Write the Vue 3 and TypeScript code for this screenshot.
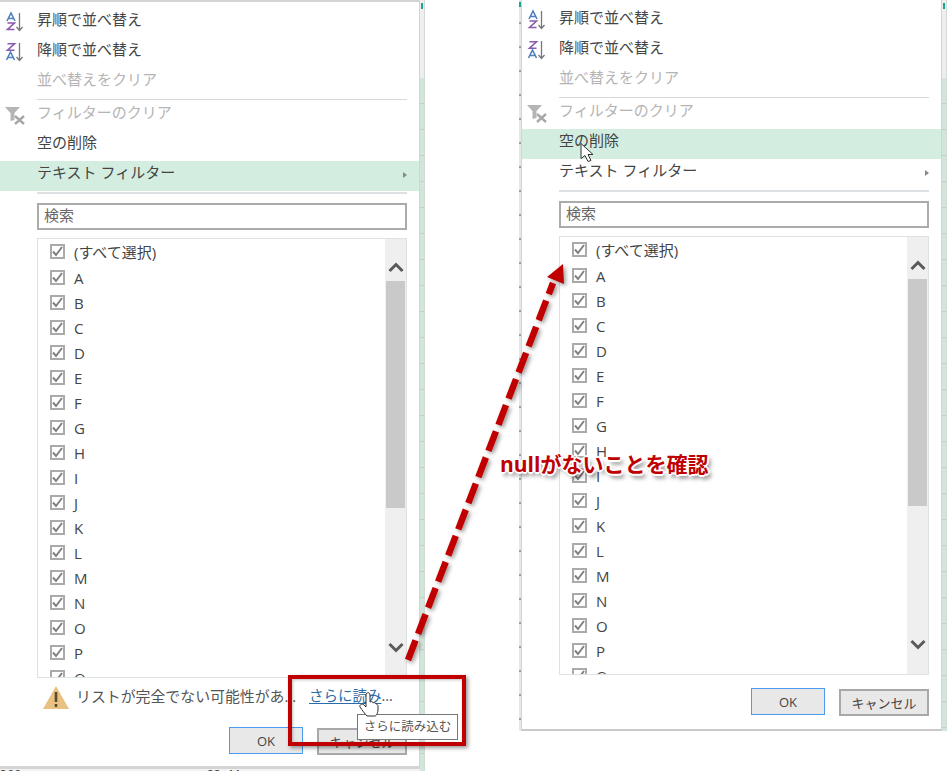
<script setup lang="ts">
type Panel = { id: string; hot: 'empty' | 'text'; warning: boolean };
const panels: Panel[] = [
  { id: 'left', hot: 'text', warning: true },
  { id: 'right', hot: 'empty', warning: false },
];
const letters = 'ABCDEFGHIJKLMNOPQ'.split('');
</script>

<template>
  <div class="canvas">
    <div class="strip strip-left"><i class="mark"></i></div>
    <div class="strip strip-right"><i class="mark"></i></div>
    <div class="sheet-bottom"><span class="c1">366</span><span class="c2">22</span><span class="c3">M</span></div>
    <div class="sheet-edge"><i class="mark"></i></div>

    <section v-for="p in panels" :key="p.id" class="panel" :class="p.id">
      <div class="row"><span class="ico">
        <svg width="26" height="26" viewBox="0 0 26 26">
          <path d="M5 14 9 6 13 14M6.500 11.500h5" fill="none" stroke="#4f81bd" stroke-width="1.600"/>
          <path d="M5.500 16h7l-7 6.500h7" fill="none" stroke="#8a5aae" stroke-width="1.600"/>
          <path d="M17.500 6v17M14.500 20l3 3.500 3-3.500" fill="none" stroke="#777" stroke-width="1.300"/>
        </svg>
      </span>昇順で並べ替え</div>
      <div class="row"><span class="ico">
        <svg width="26" height="26" viewBox="0 0 26 26">
          <path d="M5.500 6.800h7l-7 6.400h7" fill="none" stroke="#8a5aae" stroke-width="1.600"/>
          <path d="M4.500 23 8.500 15 12.500 23M6 20.500h5" fill="none" stroke="#4f81bd" stroke-width="1.600"/>
          <path d="M17.500 6v17M14.500 20l3 3.500 3-3.500" fill="none" stroke="#777" stroke-width="1.300"/>
        </svg>
      </span>降順で並べ替え</div>
      <div class="row off">並べ替えをクリア</div>
      <div class="sep"></div>
      <div class="row off"><span class="ico">
        <svg width="26" height="26" viewBox="0 0 26 26">
          <path d="M3 7h15l-5.500 6v7l-4 1v-8z" fill="#b5b5b5"/>
          <path d="M13 16l9 8M22 16l-9 8" stroke="#a8a8a8" stroke-width="2.400" fill="none"/>
        </svg>
      </span>フィルターのクリア</div>
      <div class="row" :class="{ hot: p.hot === 'empty' }">空の削除</div>
      <div class="row" :class="{ hot: p.hot === 'text' }">テキスト フィルター<i class="more"></i></div>
      <div class="sep thick"></div>

      <div class="search">検索</div>

      <div class="list" :class="{ short: !p.warning }">
        <div class="items">
          <div class="item all"><span class="cb"><svg width="11" height="11" viewBox="0 0 11 11"><path d="M1 5.500 4 9l6-8" fill="none" stroke="#808080" stroke-width="2"/></svg></span>(すべて選択)</div>
          <div v-for="l in letters" :key="l" class="item"><span class="cb"><svg width="11" height="11" viewBox="0 0 11 11"><path d="M1 5.500 4 9l6-8" fill="none" stroke="#808080" stroke-width="2"/></svg></span>{{ l }}</div>
        </div>
        <div class="scroll">
          <svg class="chev" width="16" height="11" viewBox="0 0 16 11"><path d="M1.500 9 8 2.500 14.500 9" fill="none" stroke="#5a5a5a" stroke-width="3"/></svg>
          <div class="thumb"></div>
          <svg class="chev down" width="16" height="11" viewBox="0 0 16 11"><path d="M1.500 2 8 8.500 14.500 2" fill="none" stroke="#5a5a5a" stroke-width="3"/></svg>
        </div>
      </div>

      <div v-if="p.warning" class="warn">
        <svg width="28" height="25" viewBox="0 0 28 25"><path d="M14 1 27 24H1z" fill="#e9c182"/><path d="M14 7v10M14 19v3" stroke="#5c4a2e" stroke-width="2.600" fill="none"/></svg>
        <span class="warn-text">リストが完全でない可能性があ...</span>
        <span class="link"><u>さらに読み</u>...</span>
      </div>

      <div class="actions">
        <button class="btn ok">OK</button>
        <button class="btn cancel">キャンセル</button>
      </div>
    </section>

    <div class="tooltip">さらに読み込む</div>
    <div class="redbox"></div>

    <svg class="overlay" width="950" height="771" viewBox="0 0 950 771">
      <defs>
        <filter id="sh" x="-20%" y="-20%" width="140%" height="140%">
          <feDropShadow dx="2" dy="2" stdDeviation="2" flood-color="#000" flood-opacity="0.4"/>
        </filter>
      </defs>
      <g filter="url(#sh)">
        <line x1="408" y1="660" x2="553" y2="283" stroke="#c00000" stroke-width="6.500" stroke-dasharray="21 7"/>
        <path d="M563 264 547 277 564 284z" fill="#c00000"/>
      </g>
      <!-- hand cursor -->
      <path d="M366 695c0-3 4-3 4 0v7c2-1 3 0 3 1 1-1 3 0 3 1 1 0 2 1 2 2v4c0 3-2 6-3 6h-8c-2-2-5-6-7-9-1-2 2-4 4-2l2 2z" fill="#fff" stroke="#333" stroke-width="1"/>
      <!-- arrow cursor -->
      <path d="M581 143.500v15l4-3 3 6 3-1-3-6h5z" fill="#fff" stroke="#333" stroke-width="1"/>
    </svg>

    <div class="note">nullがないことを確認</div>
  </div>
</template>

<style>
html, body { margin: 0; background: #fff; }
</style>

<style scoped>
.canvas {
  position: relative;
  width: 950px;
  height: 771px;
  overflow: hidden;
  background: #fff;
  font-family: "Open Sans", "Noto Sans CJK JP", sans-serif;
  color: #444;
}
.strip {
  position: absolute;
  top: 0;
  width: 5px;
  box-sizing: border-box;
  background:
    linear-gradient(#eeeeee, #eeeeee) 0 0 / 100% 78px no-repeat,
    repeating-linear-gradient(#cfe6d9 0, #cfe6d9 25px, #c4cfc9 25px, #c4cfc9 26px);
  border-right: 1px solid #d4dbd7;
}
.strip-left { left: 420px; height: 771px; }
.strip-right { left: 942px; height: 731px; }
.mark {
  position: absolute; left: 1px; top: 3px; width: 2px; height: 6px; background: #17a98f;
}
.sheet-bottom {
  position: absolute; left: 0; top: 768px; width: 420px; height: 3px;
  overflow: hidden; background: #f2f2f2; border-top: 1px solid #d4d4d4; box-sizing: border-box;
  font-size: 12px; line-height: 11px; color: #444;
  display: flex;
}
.c1 { width: 207px; }
.c2 { width: 22px; }
.sheet-edge {
  position: absolute; left: 519px; top: 0; width: 2px; height: 731px;
  background: repeating-linear-gradient(#e4e8e6 0, #e4e8e6 22px, #9aa3a0 22px, #9aa3a0 24px);
}
.sheet-edge .mark { left: 0; top: 2px; height: 5px; }

.panel {
  position: absolute;
  top: 0;
  box-sizing: border-box;
  background: #fff;
  display: flex;
  flex-direction: column;
  padding-left: 37px;
  padding-top: 6px;
  font-size: 15px;
}
.panel.left {
  left: 0; width: 420px; height: 768px;
  border-top: 2px solid #d4d4d4;
  border-right: 1px solid #d4d4d4;
  border-bottom: 2px solid #d4d4d4;
}
.panel.right {
  left: 521px; width: 421px; height: 731px;
  border-left: 1px solid #d4d4d4;
  border-right: 1px solid #d4d4d4;
  border-bottom: 2px solid #c9c9c9;
}
.row {
  position: relative;
  height: 30px;
  line-height: 22px;
  margin-left: -37px;
  padding-left: 37px;
  color: #444;
  white-space: nowrap;
}
.row.hot { background: #d3eee0; }
.row.off { color: #b4b4b4; }
.ico { position: absolute; left: 2px; top: -1px; height: 26px; width: 26px; }
.ico svg { display: block; }
.more {
  position: absolute; right: 12px; top: 11px;
  border-left: 4px solid #888;
  border-top: 3.500px solid transparent;
  border-bottom: 3.500px solid transparent;
}
.sep { height: 1px; background: #d8d8d8; margin: 1px 12px 1px 0; }
.sep.thick { height: 2px; background: #dde1e4; margin: 1px 12px 0 0; }
.search {
  box-sizing: border-box;
  margin: 9px 12px 0 0;
  height: 27px;
  border: 2px solid #ababab;
  padding-left: 5px;
  font-size: 15px;
  line-height: 20px;
  color: #666;
}
.list {
  box-sizing: border-box;
  margin: 8px 12px 0 0;
  height: 440px;
  border: 1px solid #dde3e0;
  display: flex;
  overflow: hidden;
}
.list.short { height: 439px; }
.items { flex: 1; overflow: hidden; padding: 0 0 0 12px; }
.item {
  height: 25px;
  display: flex;
  align-items: center;
  gap: 9px;
  font-size: 15px;
  color: #444;
}
.item.all { height: 26px; padding-bottom: 1px; box-sizing: border-box; }
.cb {
  box-sizing: border-box;
  width: 15px; height: 15px;
  border: 2px solid #aaa;
  display: flex; align-items: center; justify-content: center;
  flex: none;
}
.scroll {
  width: 21px;
  background: #efefef;
  display: flex;
  flex-direction: column;
  align-items: center;
  position: relative;
  padding-top: 23px;
  box-sizing: border-box;
}
.chev { display: block; }
.thumb { width: 19px; height: 227px; background: #c9c9c9; margin-top: 8px; }
.chev.down { position: absolute; bottom: 24px; left: 3px; }
.warn {
  display: flex;
  align-items: center;
  height: 38px;
  margin-left: 5px;
  font-size: 15px;
  color: #555;
}
.warn svg { margin-right: 6px; flex: none; }
.warn-text { width: 233px; white-space: nowrap; font-size: 14.900px; line-height: 32px; height: 34px; }
.link { color: #555; white-space: nowrap; font-size: 14.500px; line-height: 32px; height: 34px; }
.link u { color: #2a6ca8; text-underline-offset: 2px; }
.actions {
  display: flex;
  align-items: flex-start;
  justify-content: flex-end;
  gap: 14px;
  margin-right: 12px;
  margin-top: 11px;
}
.panel.right .actions { margin-top: 13px; }
.btn {
  box-sizing: border-box;
  font-family: inherit;
  font-size: 13px;
  color: #444;
  background: #e8e8e8;
  padding: 0;
  height: 27px;
  line-height: 20px;
}
.btn.ok { width: 74px; border: 1px solid #4a9cf0; }
.btn.cancel { width: 90px; border: 2px solid #a8a8a8; margin-top: 1px; }

.overlay { position: absolute; left: 0; top: 0; pointer-events: none; }
.tooltip {
  position: absolute; left: 357px; top: 714px; width: 101px; height: 26px;
  box-sizing: border-box;
  background: #fff; border: 1px solid #777;
  font-size: 12.500px; line-height: 24px; text-align: center; color: #555;
}
.redbox {
  position: absolute; left: 288px; top: 675px; width: 178px; height: 71px;
  box-sizing: border-box;
  border: 4px solid #c00000;
  box-shadow: 2px 2px 4px rgba(0,0,0,.4), inset 1px 1px 3px rgba(0,0,0,.25);
}
.note {
  position: absolute; left: 500px; top: 450px;
  font-family: "Open Sans", "Noto Sans CJK JP", sans-serif;
  font-size: 21px; line-height: 29px; font-weight: 700; color: #c00000;
  white-space: nowrap;
  text-shadow: 2px 0 0 #fff, -2px 0 0 #fff, 0 2px 0 #fff, 0 -2px 0 #fff, 1px 1px 0 #fff, -1px -1px 0 #fff, 1px -1px 0 #fff, -1px 1px 0 #fff, 3px 4px 4px rgba(0,0,0,.55);
}
</style>
